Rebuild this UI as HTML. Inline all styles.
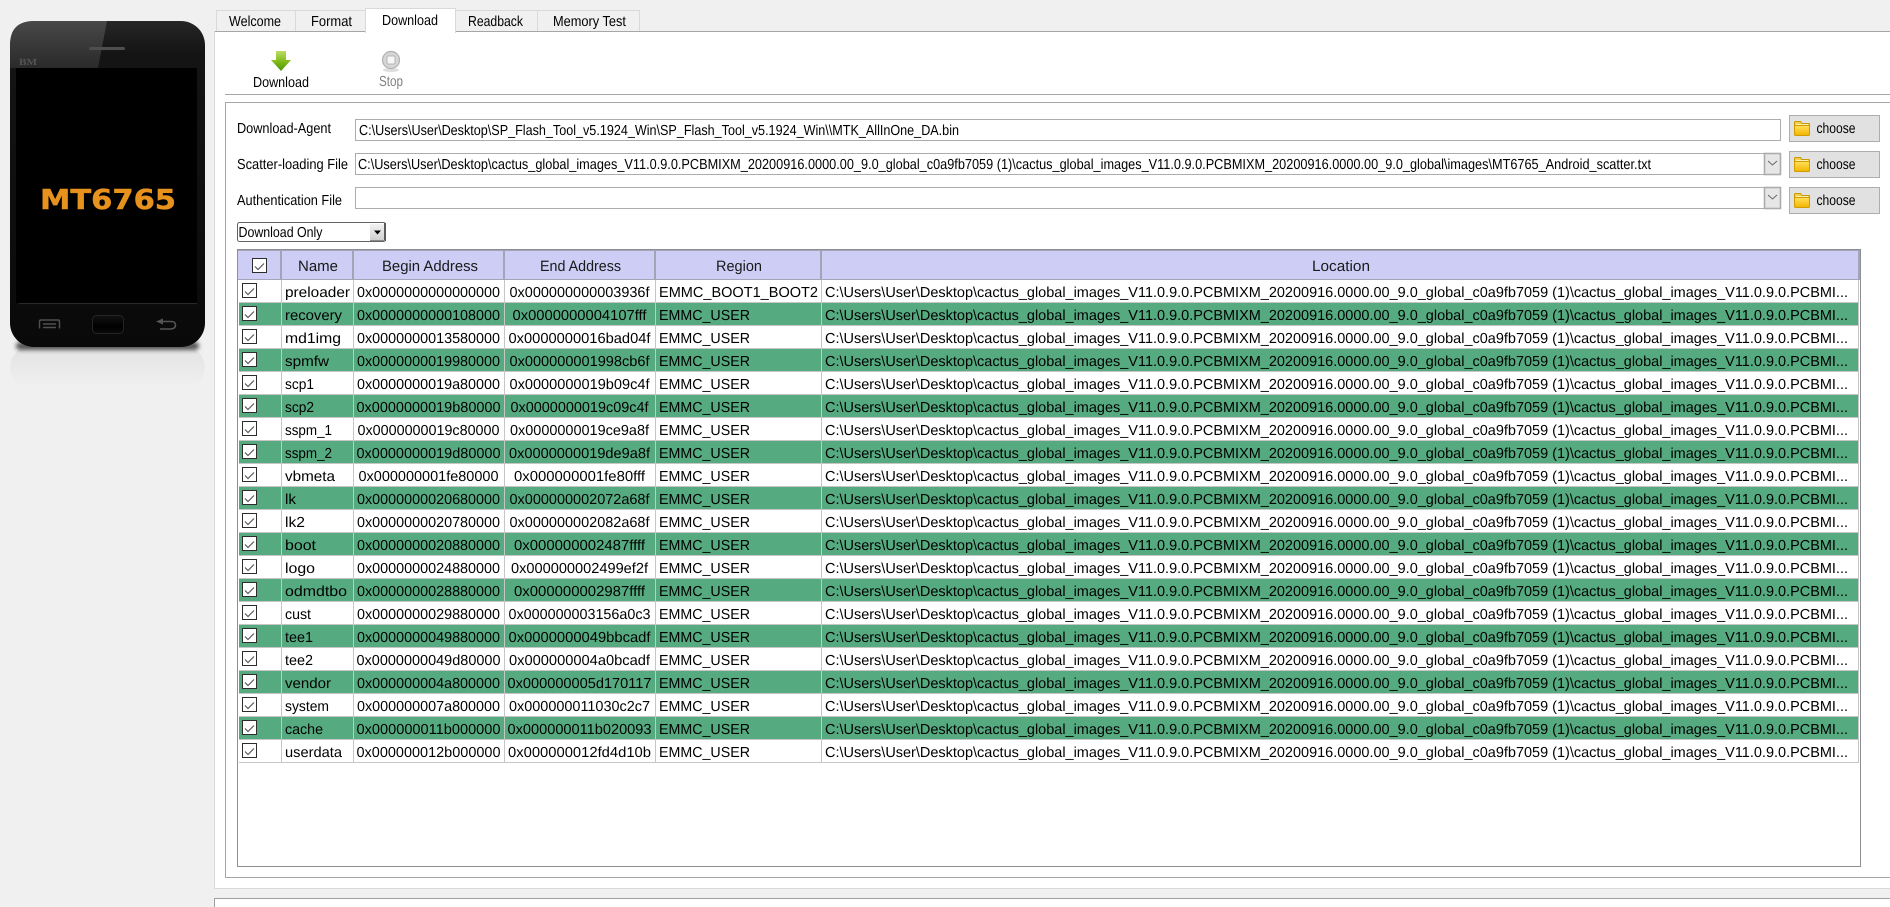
<!DOCTYPE html>
<html lang="en">
<head>
<meta charset="utf-8">
<title>SP Flash Tool</title>
<style>
html,body{margin:0;padding:0;width:1890px;height:907px;overflow:hidden;background:#f0f0f0}
svg{display:block}
text{font-family:"Liberation Sans",Arial,sans-serif;font-size:14.5px;fill:#000;text-rendering:geometricPrecision}
.h{fill:#1a1a1a;font-size:15px}
</style>
</head>
<body>
<svg xmlns="http://www.w3.org/2000/svg" width="1890" height="907" viewBox="0 0 1890 907">
<defs>
<linearGradient id="body" x1="0" y1="0" x2="0" y2="1"><stop offset="0" stop-color="#262626"/><stop offset=".1" stop-color="#141414"/><stop offset=".85" stop-color="#0b0b0b"/><stop offset="1" stop-color="#090909"/></linearGradient>
<linearGradient id="gloss" x1="0" y1="0" x2="0" y2="1"><stop offset="0" stop-color="#484848"/><stop offset="1" stop-color="#2a2a2a"/></linearGradient>
<linearGradient id="refl" x1="0" y1="0" x2="0" y2="1"><stop offset="0" stop-color="#e2e2e2"/><stop offset="1" stop-color="#f0f0f0"/></linearGradient>
<linearGradient id="home" x1="0" y1="0" x2="0" y2="1"><stop offset="0" stop-color="#111"/><stop offset=".6" stop-color="#000"/><stop offset="1" stop-color="#0a0a0a"/></linearGradient>
<linearGradient id="arrow" x1="0" y1="0" x2="0" y2="1"><stop offset="0" stop-color="#bcdc68"/><stop offset=".5" stop-color="#84bc1c"/><stop offset="1" stop-color="#4c9400"/></linearGradient>
<linearGradient id="fold" x1="0" y1="0" x2="0" y2="1"><stop offset="0" stop-color="#ffe25a"/><stop offset="1" stop-color="#f4b400"/></linearGradient>
<linearGradient id="drop" x1="0" y1="0" x2="0" y2="1"><stop offset="0" stop-color="#f2f2f2"/><stop offset="1" stop-color="#d0d0d0"/></linearGradient>
<filter id="blur" x="-10%" y="-50%" width="120%" height="200%"><feGaussianBlur stdDeviation="2"/></filter>
<g id="folder">
<path d="M0.5 3V1.5Q0.5 .5 1.5 .5H6.5L8 2.5H15Q15.5 2.5 15.5 3.5V5H.5Z" fill="#f0cf50" stroke="#c99a00"/>
<rect x="2" y="3.2" width="12" height="1.3" fill="#fff6d0"/>
<rect x=".5" y="4.5" width="15" height="10" rx="1" fill="url(#fold)" stroke="#d09c00"/>
</g>
<g id="cb">
<rect x=".5" y=".5" width="14" height="14" fill="#fff" stroke="#2c2c2c"/>
<path d="M3 8.5L6 11.5L12 5.5" fill="none" stroke="#585858" stroke-width="1.2"/>
</g>
<path id="chev" d="M-4.5 -2L0 2L4.5 -2" fill="none" stroke="#666" stroke-width="1"/>
</defs>

<rect width="1890" height="907" fill="#f0f0f0"/>

<!-- phone -->
<rect x="10" y="347" width="195" height="40" rx="20" fill="url(#refl)"/>
<rect x="16" y="342" width="183" height="8" rx="4" fill="#555" filter="url(#blur)"/>
<rect x="10" y="21" width="195" height="326" rx="24" fill="url(#body)"/>
<path d="M10 68V45Q10 21 34 21H107L98 68Z" fill="url(#gloss)"/>
<rect x="89" y="47" width="36" height="3" rx="1.5" fill="#4e4e4e"/>
<text x="19" y="65" style="font-family:'Liberation Serif',serif;font-size:9.5px;font-weight:bold;fill:#555" textLength="18" lengthAdjust="spacingAndGlyphs">BM</text>
<rect x="16" y="68" width="181" height="235" fill="#000"/>
<rect x="19" y="303" width="178" height="1" fill="#2a2a2a"/>
<text x="40" y="209" style="font-family:'DejaVu Sans',sans-serif;font-weight:bold;font-size:27.5px;fill:#e8921e;stroke:#e8921e;stroke-width:.5px" textLength="136" lengthAdjust="spacingAndGlyphs">MT6765</text>
<rect x="92.5" y="315.5" width="31" height="18" rx="4" fill="url(#home)" stroke="#242424"/>
<path d="M39.5 328.5V321.5Q39.5 320 41 320H58Q59.5 320 59.5 321.5V328.5" fill="none" stroke="#505050" stroke-width="1.4"/>
<path d="M43 324H56M43 327.5H56" stroke="#505050" stroke-width="1.4"/>
<path d="M160 321.5H171Q175.5 321.5 175.5 325T171 329H160" fill="none" stroke="#555" stroke-width="1.6"/>
<path d="M156 321.5L163 318.5V324.5Z" fill="#555"/>

<!-- tabs -->
<rect x="216.5" y="10.5" width="79" height="22" fill="#f0f0f0" stroke="#d9d9d9"/>
<rect x="295.5" y="10.5" width="70" height="22" fill="#f0f0f0" stroke="#d9d9d9"/>
<rect x="455.5" y="10.5" width="82" height="22" fill="#f0f0f0" stroke="#d9d9d9"/>
<rect x="537.5" y="10.5" width="102" height="22" fill="#f0f0f0" stroke="#d9d9d9"/>
<text x="229" y="26" textLength="52" lengthAdjust="spacingAndGlyphs">Welcome</text>
<text x="311" y="26" textLength="41" lengthAdjust="spacingAndGlyphs">Format</text>
<text x="468" y="26" textLength="55" lengthAdjust="spacingAndGlyphs">Readback</text>
<text x="553" y="26" textLength="73" lengthAdjust="spacingAndGlyphs">Memory Test</text>

<!-- pane -->
<rect x="214" y="31" width="1676" height="857" fill="#fff"/>
<rect x="214" y="31" width="1676" height="1" fill="#a6a6a6"/>
<rect x="214" y="31" width="1" height="858" fill="#d9d9d9"/>
<rect x="214" y="888" width="1676" height="1" fill="#d9d9d9"/>
<rect x="365.5" y="8.5" width="90" height="24" fill="#fff" stroke="#d9d9d9"/>
<rect x="366" y="31" width="89" height="3" fill="#fff"/>
<text x="382" y="25" textLength="56" lengthAdjust="spacingAndGlyphs">Download</text>

<!-- bottom panel -->
<rect x="214" y="898" width="1676" height="9" fill="#fff"/>
<rect x="214" y="898" width="1676" height="1" fill="#a0a0a0"/>
<rect x="214" y="898" width="1" height="9" fill="#a0a0a0"/>

<!-- toolbar -->
<path d="M276 51H286V60H291L281 71L271 60H276Z" fill="url(#arrow)"/>
<text x="253" y="87" textLength="56" lengthAdjust="spacingAndGlyphs">Download</text>
<ellipse cx="391" cy="70" rx="8" ry="2" fill="#ddd"/>
<circle cx="391" cy="60" r="8.5" fill="#d6d6d6" stroke="#b0b0b0" stroke-width="1.2"/>
<rect x="387" y="56" width="8" height="8" rx="1" fill="#f6f6f6" stroke="#a8a8a8" stroke-width=".8"/>
<text x="379" y="86" textLength="24" lengthAdjust="spacingAndGlyphs" style="fill:#7f7f7f">Stop</text>
<rect x="225" y="94" width="1665" height="1" fill="#a6a6a6"/>

<!-- group box -->
<path d="M1890 102.5H225.5V877.5H1890" fill="none" stroke="#a6a6a6"/>

<!-- form -->
<text x="237" y="133" textLength="94" lengthAdjust="spacingAndGlyphs">Download-Agent</text>
<text x="237" y="169" textLength="111" lengthAdjust="spacingAndGlyphs">Scatter-loading File</text>
<text x="237" y="205" textLength="105" lengthAdjust="spacingAndGlyphs">Authentication File</text>

<rect x="355.5" y="119.5" width="1425" height="21" fill="#fff" stroke="#acacac"/>
<text x="359" y="135" textLength="600" lengthAdjust="spacingAndGlyphs">C:\Users\User\Desktop\SP_Flash_Tool_v5.1924_Win\SP_Flash_Tool_v5.1924_Win\\MTK_AllInOne_DA.bin</text>
<rect x="355.5" y="153.5" width="1425" height="21" fill="#fff" stroke="#acacac"/>
<text x="358" y="169" textLength="1293" lengthAdjust="spacingAndGlyphs">C:\Users\User\Desktop\cactus_global_images_V11.0.9.0.PCBMIXM_20200916.0000.00_9.0_global_c0a9fb7059 (1)\cactus_global_images_V11.0.9.0.PCBMIXM_20200916.0000.00_9.0_global\images\MT6765_Android_scatter.txt</text>
<rect x="355.5" y="187.5" width="1425" height="21" fill="#fff" stroke="#acacac"/>

<rect x="1764.5" y="153.5" width="16" height="21" fill="#e6e6e6" stroke="#acacac" stroke-width="1.6"/>
<use href="#chev" x="1772.5" y="163"/>
<rect x="1764.5" y="187.5" width="16" height="21" fill="#e6e6e6" stroke="#acacac" stroke-width="1.6"/>
<use href="#chev" x="1772.5" y="197"/>

<rect x="1789.5" y="115.5" width="90" height="26" fill="#e1e1e1" stroke="#adadad"/>
<rect x="1789.5" y="151.5" width="90" height="26" fill="#e1e1e1" stroke="#adadad"/>
<rect x="1789.5" y="187.5" width="90" height="26" fill="#e1e1e1" stroke="#adadad"/>
<use href="#folder" x="1794" y="121"/>
<use href="#folder" x="1794" y="157"/>
<use href="#folder" x="1794" y="193"/>
<text x="1816.5" y="133" textLength="39" lengthAdjust="spacingAndGlyphs">choose</text>
<text x="1816.5" y="169" textLength="39" lengthAdjust="spacingAndGlyphs">choose</text>
<text x="1816.5" y="205" textLength="39" lengthAdjust="spacingAndGlyphs">choose</text>

<!-- dropdown -->
<rect x="237.5" y="222.5" width="148" height="19" rx="2" fill="#fff" stroke="#646464"/>
<rect x="370" y="224" width="14" height="16" fill="url(#drop)"/>
<rect x="384" y="223" width="2" height="18" fill="#5a5a5a"/>
<rect x="370" y="240" width="15" height="1" fill="#8a8a8a"/>
<path d="M374 230.5H381L377.5 234.5Z" fill="#000"/>
<text x="238.5" y="237" textLength="84" lengthAdjust="spacingAndGlyphs">Download Only</text>

<!-- table -->
<rect x="237.5" y="249.5" width="1623" height="617" fill="#fff" stroke="#8c9094"/>
<rect x="238" y="250" width="1622" height="29" fill="#cdcdf6"/>
<rect x="238" y="279" width="1622" height="1" fill="#a4a4b8"/>
<rect x="238" y="250" width="1622" height="1" fill="#a4a4b8"/>
<rect x="1858" y="250" width="2" height="29" fill="#a4a4b8"/>
<g fill="#a4a4b8">
<rect x="280" y="251" width="2" height="28"/>
<rect x="352" y="251" width="2" height="28"/>
<rect x="503" y="251" width="2" height="28"/>
<rect x="654" y="251" width="2" height="28"/>
<rect x="820" y="251" width="2" height="28"/>
</g>
<use href="#cb" x="252" y="258"/>
<text class="h" x="298" y="271" textLength="40" lengthAdjust="spacingAndGlyphs">Name</text>
<text class="h" x="382" y="271" textLength="96" lengthAdjust="spacingAndGlyphs">Begin Address</text>
<text class="h" x="540" y="271" textLength="81" lengthAdjust="spacingAndGlyphs">End Address</text>
<text class="h" x="716" y="271" textLength="46" lengthAdjust="spacingAndGlyphs">Region</text>
<text class="h" x="1312" y="271" textLength="58" lengthAdjust="spacingAndGlyphs">Location</text>

<!-- green rows -->
<g fill="#55aa80">
<rect x="239" y="303" width="1619" height="22"/>
<rect x="239" y="349" width="1619" height="22"/>
<rect x="239" y="395" width="1619" height="22"/>
<rect x="239" y="441" width="1619" height="22"/>
<rect x="239" y="487" width="1619" height="22"/>
<rect x="239" y="533" width="1619" height="22"/>
<rect x="239" y="579" width="1619" height="22"/>
<rect x="239" y="625" width="1619" height="22"/>
<rect x="239" y="671" width="1619" height="22"/>
<rect x="239" y="717" width="1619" height="22"/>
</g>
<!-- grid -->
<g fill="#c6c6c6">
<rect x="239" y="302" width="1620" height="1"/><rect x="239" y="325" width="1620" height="1"/><rect x="239" y="348" width="1620" height="1"/><rect x="239" y="371" width="1620" height="1"/><rect x="239" y="394" width="1620" height="1"/><rect x="239" y="417" width="1620" height="1"/><rect x="239" y="440" width="1620" height="1"/><rect x="239" y="463" width="1620" height="1"/><rect x="239" y="486" width="1620" height="1"/><rect x="239" y="509" width="1620" height="1"/><rect x="239" y="532" width="1620" height="1"/><rect x="239" y="555" width="1620" height="1"/><rect x="239" y="578" width="1620" height="1"/><rect x="239" y="601" width="1620" height="1"/><rect x="239" y="624" width="1620" height="1"/><rect x="239" y="647" width="1620" height="1"/><rect x="239" y="670" width="1620" height="1"/><rect x="239" y="693" width="1620" height="1"/><rect x="239" y="716" width="1620" height="1"/><rect x="239" y="739" width="1620" height="1"/><rect x="239" y="762" width="1620" height="1"/>
<rect x="281" y="280" width="1" height="483"/><rect x="353" y="280" width="1" height="483"/><rect x="504" y="280" width="1" height="483"/><rect x="655" y="280" width="1" height="483"/><rect x="821" y="280" width="1" height="483"/><rect x="1858" y="280" width="1" height="483"/>
</g>
<!-- checkboxes -->
<use href="#cb" x="242" y="283"/><use href="#cb" x="242" y="306"/><use href="#cb" x="242" y="329"/><use href="#cb" x="242" y="352"/><use href="#cb" x="242" y="375"/><use href="#cb" x="242" y="398"/><use href="#cb" x="242" y="421"/><use href="#cb" x="242" y="444"/><use href="#cb" x="242" y="467"/><use href="#cb" x="242" y="490"/><use href="#cb" x="242" y="513"/><use href="#cb" x="242" y="536"/><use href="#cb" x="242" y="559"/><use href="#cb" x="242" y="582"/><use href="#cb" x="242" y="605"/><use href="#cb" x="242" y="628"/><use href="#cb" x="242" y="651"/><use href="#cb" x="242" y="674"/><use href="#cb" x="242" y="697"/><use href="#cb" x="242" y="720"/><use href="#cb" x="242" y="743"/>

<!-- names -->
<text x="285" y="297" textLength="65" lengthAdjust="spacingAndGlyphs">preloader</text>
<text x="285" y="320" textLength="57" lengthAdjust="spacingAndGlyphs">recovery</text>
<text x="285" y="343" textLength="56" lengthAdjust="spacingAndGlyphs">md1img</text>
<text x="285" y="366" textLength="44" lengthAdjust="spacingAndGlyphs">spmfw</text>
<text x="285" y="389" textLength="29" lengthAdjust="spacingAndGlyphs">scp1</text>
<text x="285" y="412" textLength="29" lengthAdjust="spacingAndGlyphs">scp2</text>
<text x="285" y="435" textLength="47" lengthAdjust="spacingAndGlyphs">sspm_1</text>
<text x="285" y="458" textLength="47" lengthAdjust="spacingAndGlyphs">sspm_2</text>
<text x="285" y="481" textLength="50" lengthAdjust="spacingAndGlyphs">vbmeta</text>
<text x="285" y="504" textLength="11" lengthAdjust="spacingAndGlyphs">lk</text>
<text x="285" y="527" textLength="20" lengthAdjust="spacingAndGlyphs">lk2</text>
<text x="285" y="550" textLength="31" lengthAdjust="spacingAndGlyphs">boot</text>
<text x="285" y="573" textLength="30" lengthAdjust="spacingAndGlyphs">logo</text>
<text x="285" y="596" textLength="62" lengthAdjust="spacingAndGlyphs">odmdtbo</text>
<text x="285" y="619" textLength="26" lengthAdjust="spacingAndGlyphs">cust</text>
<text x="285" y="642" textLength="28" lengthAdjust="spacingAndGlyphs">tee1</text>
<text x="285" y="665" textLength="28" lengthAdjust="spacingAndGlyphs">tee2</text>
<text x="285" y="688" textLength="46" lengthAdjust="spacingAndGlyphs">vendor</text>
<text x="285" y="711" textLength="44" lengthAdjust="spacingAndGlyphs">system</text>
<text x="285" y="734" textLength="38" lengthAdjust="spacingAndGlyphs">cache</text>
<text x="285" y="757" textLength="57" lengthAdjust="spacingAndGlyphs">userdata</text>

<!-- begin -->
<text x="357" y="297" textLength="143" lengthAdjust="spacingAndGlyphs">0x0000000000000000</text>
<text x="357" y="320" textLength="143" lengthAdjust="spacingAndGlyphs">0x0000000000108000</text>
<text x="357" y="343" textLength="143" lengthAdjust="spacingAndGlyphs">0x0000000013580000</text>
<text x="357" y="366" textLength="143" lengthAdjust="spacingAndGlyphs">0x0000000019980000</text>
<text x="357" y="389" textLength="143" lengthAdjust="spacingAndGlyphs">0x0000000019a80000</text>
<text x="356.5" y="412" textLength="144" lengthAdjust="spacingAndGlyphs">0x0000000019b80000</text>
<text x="357.5" y="435" textLength="142" lengthAdjust="spacingAndGlyphs">0x0000000019c80000</text>
<text x="356.5" y="458" textLength="144" lengthAdjust="spacingAndGlyphs">0x0000000019d80000</text>
<text x="358.5" y="481" textLength="140" lengthAdjust="spacingAndGlyphs">0x000000001fe80000</text>
<text x="357" y="504" textLength="143" lengthAdjust="spacingAndGlyphs">0x0000000020680000</text>
<text x="357" y="527" textLength="143" lengthAdjust="spacingAndGlyphs">0x0000000020780000</text>
<text x="357" y="550" textLength="143" lengthAdjust="spacingAndGlyphs">0x0000000020880000</text>
<text x="357" y="573" textLength="143" lengthAdjust="spacingAndGlyphs">0x0000000024880000</text>
<text x="357" y="596" textLength="143" lengthAdjust="spacingAndGlyphs">0x0000000028880000</text>
<text x="357" y="619" textLength="143" lengthAdjust="spacingAndGlyphs">0x0000000029880000</text>
<text x="357" y="642" textLength="143" lengthAdjust="spacingAndGlyphs">0x0000000049880000</text>
<text x="356.5" y="665" textLength="144" lengthAdjust="spacingAndGlyphs">0x0000000049d80000</text>
<text x="357" y="688" textLength="143" lengthAdjust="spacingAndGlyphs">0x000000004a800000</text>
<text x="357" y="711" textLength="143" lengthAdjust="spacingAndGlyphs">0x000000007a800000</text>
<text x="356.5" y="734" textLength="144" lengthAdjust="spacingAndGlyphs">0x000000011b000000</text>
<text x="356.5" y="757" textLength="144" lengthAdjust="spacingAndGlyphs">0x000000012b000000</text>

<!-- end -->
<text x="509.5" y="297" textLength="140" lengthAdjust="spacingAndGlyphs">0x000000000003936f</text>
<text x="512.5" y="320" textLength="134" lengthAdjust="spacingAndGlyphs">0x0000000004107fff</text>
<text x="508.5" y="343" textLength="142" lengthAdjust="spacingAndGlyphs">0x0000000016bad04f</text>
<text x="509.5" y="366" textLength="140" lengthAdjust="spacingAndGlyphs">0x000000001998cb6f</text>
<text x="509.5" y="389" textLength="140" lengthAdjust="spacingAndGlyphs">0x0000000019b09c4f</text>
<text x="510.5" y="412" textLength="138" lengthAdjust="spacingAndGlyphs">0x0000000019c09c4f</text>
<text x="510" y="435" textLength="139" lengthAdjust="spacingAndGlyphs">0x0000000019ce9a8f</text>
<text x="509" y="458" textLength="141" lengthAdjust="spacingAndGlyphs">0x0000000019de9a8f</text>
<text x="514" y="481" textLength="131" lengthAdjust="spacingAndGlyphs">0x000000001fe80fff</text>
<text x="509.5" y="504" textLength="140" lengthAdjust="spacingAndGlyphs">0x000000002072a68f</text>
<text x="509.5" y="527" textLength="140" lengthAdjust="spacingAndGlyphs">0x000000002082a68f</text>
<text x="514" y="550" textLength="131" lengthAdjust="spacingAndGlyphs">0x000000002487ffff</text>
<text x="511" y="573" textLength="137" lengthAdjust="spacingAndGlyphs">0x000000002499ef2f</text>
<text x="514" y="596" textLength="131" lengthAdjust="spacingAndGlyphs">0x000000002987ffff</text>
<text x="508.5" y="619" textLength="142" lengthAdjust="spacingAndGlyphs">0x000000003156a0c3</text>
<text x="508.5" y="642" textLength="142" lengthAdjust="spacingAndGlyphs">0x0000000049bbcadf</text>
<text x="509" y="665" textLength="141" lengthAdjust="spacingAndGlyphs">0x000000004a0bcadf</text>
<text x="507.5" y="688" textLength="144" lengthAdjust="spacingAndGlyphs">0x000000005d170117</text>
<text x="509" y="711" textLength="141" lengthAdjust="spacingAndGlyphs">0x000000011030c2c7</text>
<text x="507.5" y="734" textLength="144" lengthAdjust="spacingAndGlyphs">0x000000011b020093</text>
<text x="508" y="757" textLength="143" lengthAdjust="spacingAndGlyphs">0x000000012fd4d10b</text>

<!-- region -->
<text x="659" y="297" textLength="159" lengthAdjust="spacingAndGlyphs">EMMC_BOOT1_BOOT2</text>
<text x="659" y="320" textLength="91" lengthAdjust="spacingAndGlyphs">EMMC_USER</text>
<text x="659" y="343" textLength="91" lengthAdjust="spacingAndGlyphs">EMMC_USER</text>
<text x="659" y="366" textLength="91" lengthAdjust="spacingAndGlyphs">EMMC_USER</text>
<text x="659" y="389" textLength="91" lengthAdjust="spacingAndGlyphs">EMMC_USER</text>
<text x="659" y="412" textLength="91" lengthAdjust="spacingAndGlyphs">EMMC_USER</text>
<text x="659" y="435" textLength="91" lengthAdjust="spacingAndGlyphs">EMMC_USER</text>
<text x="659" y="458" textLength="91" lengthAdjust="spacingAndGlyphs">EMMC_USER</text>
<text x="659" y="481" textLength="91" lengthAdjust="spacingAndGlyphs">EMMC_USER</text>
<text x="659" y="504" textLength="91" lengthAdjust="spacingAndGlyphs">EMMC_USER</text>
<text x="659" y="527" textLength="91" lengthAdjust="spacingAndGlyphs">EMMC_USER</text>
<text x="659" y="550" textLength="91" lengthAdjust="spacingAndGlyphs">EMMC_USER</text>
<text x="659" y="573" textLength="91" lengthAdjust="spacingAndGlyphs">EMMC_USER</text>
<text x="659" y="596" textLength="91" lengthAdjust="spacingAndGlyphs">EMMC_USER</text>
<text x="659" y="619" textLength="91" lengthAdjust="spacingAndGlyphs">EMMC_USER</text>
<text x="659" y="642" textLength="91" lengthAdjust="spacingAndGlyphs">EMMC_USER</text>
<text x="659" y="665" textLength="91" lengthAdjust="spacingAndGlyphs">EMMC_USER</text>
<text x="659" y="688" textLength="91" lengthAdjust="spacingAndGlyphs">EMMC_USER</text>
<text x="659" y="711" textLength="91" lengthAdjust="spacingAndGlyphs">EMMC_USER</text>
<text x="659" y="734" textLength="91" lengthAdjust="spacingAndGlyphs">EMMC_USER</text>
<text x="659" y="757" textLength="91" lengthAdjust="spacingAndGlyphs">EMMC_USER</text>

<!-- location -->
<text x="825" y="297" textLength="1023" lengthAdjust="spacingAndGlyphs">C:\Users\User\Desktop\cactus_global_images_V11.0.9.0.PCBMIXM_20200916.0000.00_9.0_global_c0a9fb7059 (1)\cactus_global_images_V11.0.9.0.PCBMI...</text>
<text x="825" y="320" textLength="1023" lengthAdjust="spacingAndGlyphs">C:\Users\User\Desktop\cactus_global_images_V11.0.9.0.PCBMIXM_20200916.0000.00_9.0_global_c0a9fb7059 (1)\cactus_global_images_V11.0.9.0.PCBMI...</text>
<text x="825" y="343" textLength="1023" lengthAdjust="spacingAndGlyphs">C:\Users\User\Desktop\cactus_global_images_V11.0.9.0.PCBMIXM_20200916.0000.00_9.0_global_c0a9fb7059 (1)\cactus_global_images_V11.0.9.0.PCBMI...</text>
<text x="825" y="366" textLength="1023" lengthAdjust="spacingAndGlyphs">C:\Users\User\Desktop\cactus_global_images_V11.0.9.0.PCBMIXM_20200916.0000.00_9.0_global_c0a9fb7059 (1)\cactus_global_images_V11.0.9.0.PCBMI...</text>
<text x="825" y="389" textLength="1023" lengthAdjust="spacingAndGlyphs">C:\Users\User\Desktop\cactus_global_images_V11.0.9.0.PCBMIXM_20200916.0000.00_9.0_global_c0a9fb7059 (1)\cactus_global_images_V11.0.9.0.PCBMI...</text>
<text x="825" y="412" textLength="1023" lengthAdjust="spacingAndGlyphs">C:\Users\User\Desktop\cactus_global_images_V11.0.9.0.PCBMIXM_20200916.0000.00_9.0_global_c0a9fb7059 (1)\cactus_global_images_V11.0.9.0.PCBMI...</text>
<text x="825" y="435" textLength="1023" lengthAdjust="spacingAndGlyphs">C:\Users\User\Desktop\cactus_global_images_V11.0.9.0.PCBMIXM_20200916.0000.00_9.0_global_c0a9fb7059 (1)\cactus_global_images_V11.0.9.0.PCBMI...</text>
<text x="825" y="458" textLength="1023" lengthAdjust="spacingAndGlyphs">C:\Users\User\Desktop\cactus_global_images_V11.0.9.0.PCBMIXM_20200916.0000.00_9.0_global_c0a9fb7059 (1)\cactus_global_images_V11.0.9.0.PCBMI...</text>
<text x="825" y="481" textLength="1023" lengthAdjust="spacingAndGlyphs">C:\Users\User\Desktop\cactus_global_images_V11.0.9.0.PCBMIXM_20200916.0000.00_9.0_global_c0a9fb7059 (1)\cactus_global_images_V11.0.9.0.PCBMI...</text>
<text x="825" y="504" textLength="1023" lengthAdjust="spacingAndGlyphs">C:\Users\User\Desktop\cactus_global_images_V11.0.9.0.PCBMIXM_20200916.0000.00_9.0_global_c0a9fb7059 (1)\cactus_global_images_V11.0.9.0.PCBMI...</text>
<text x="825" y="527" textLength="1023" lengthAdjust="spacingAndGlyphs">C:\Users\User\Desktop\cactus_global_images_V11.0.9.0.PCBMIXM_20200916.0000.00_9.0_global_c0a9fb7059 (1)\cactus_global_images_V11.0.9.0.PCBMI...</text>
<text x="825" y="550" textLength="1023" lengthAdjust="spacingAndGlyphs">C:\Users\User\Desktop\cactus_global_images_V11.0.9.0.PCBMIXM_20200916.0000.00_9.0_global_c0a9fb7059 (1)\cactus_global_images_V11.0.9.0.PCBMI...</text>
<text x="825" y="573" textLength="1023" lengthAdjust="spacingAndGlyphs">C:\Users\User\Desktop\cactus_global_images_V11.0.9.0.PCBMIXM_20200916.0000.00_9.0_global_c0a9fb7059 (1)\cactus_global_images_V11.0.9.0.PCBMI...</text>
<text x="825" y="596" textLength="1023" lengthAdjust="spacingAndGlyphs">C:\Users\User\Desktop\cactus_global_images_V11.0.9.0.PCBMIXM_20200916.0000.00_9.0_global_c0a9fb7059 (1)\cactus_global_images_V11.0.9.0.PCBMI...</text>
<text x="825" y="619" textLength="1023" lengthAdjust="spacingAndGlyphs">C:\Users\User\Desktop\cactus_global_images_V11.0.9.0.PCBMIXM_20200916.0000.00_9.0_global_c0a9fb7059 (1)\cactus_global_images_V11.0.9.0.PCBMI...</text>
<text x="825" y="642" textLength="1023" lengthAdjust="spacingAndGlyphs">C:\Users\User\Desktop\cactus_global_images_V11.0.9.0.PCBMIXM_20200916.0000.00_9.0_global_c0a9fb7059 (1)\cactus_global_images_V11.0.9.0.PCBMI...</text>
<text x="825" y="665" textLength="1023" lengthAdjust="spacingAndGlyphs">C:\Users\User\Desktop\cactus_global_images_V11.0.9.0.PCBMIXM_20200916.0000.00_9.0_global_c0a9fb7059 (1)\cactus_global_images_V11.0.9.0.PCBMI...</text>
<text x="825" y="688" textLength="1023" lengthAdjust="spacingAndGlyphs">C:\Users\User\Desktop\cactus_global_images_V11.0.9.0.PCBMIXM_20200916.0000.00_9.0_global_c0a9fb7059 (1)\cactus_global_images_V11.0.9.0.PCBMI...</text>
<text x="825" y="711" textLength="1023" lengthAdjust="spacingAndGlyphs">C:\Users\User\Desktop\cactus_global_images_V11.0.9.0.PCBMIXM_20200916.0000.00_9.0_global_c0a9fb7059 (1)\cactus_global_images_V11.0.9.0.PCBMI...</text>
<text x="825" y="734" textLength="1023" lengthAdjust="spacingAndGlyphs">C:\Users\User\Desktop\cactus_global_images_V11.0.9.0.PCBMIXM_20200916.0000.00_9.0_global_c0a9fb7059 (1)\cactus_global_images_V11.0.9.0.PCBMI...</text>
<text x="825" y="757" textLength="1023" lengthAdjust="spacingAndGlyphs">C:\Users\User\Desktop\cactus_global_images_V11.0.9.0.PCBMIXM_20200916.0000.00_9.0_global_c0a9fb7059 (1)\cactus_global_images_V11.0.9.0.PCBMI...</text>
</svg>
</body>
</html>
